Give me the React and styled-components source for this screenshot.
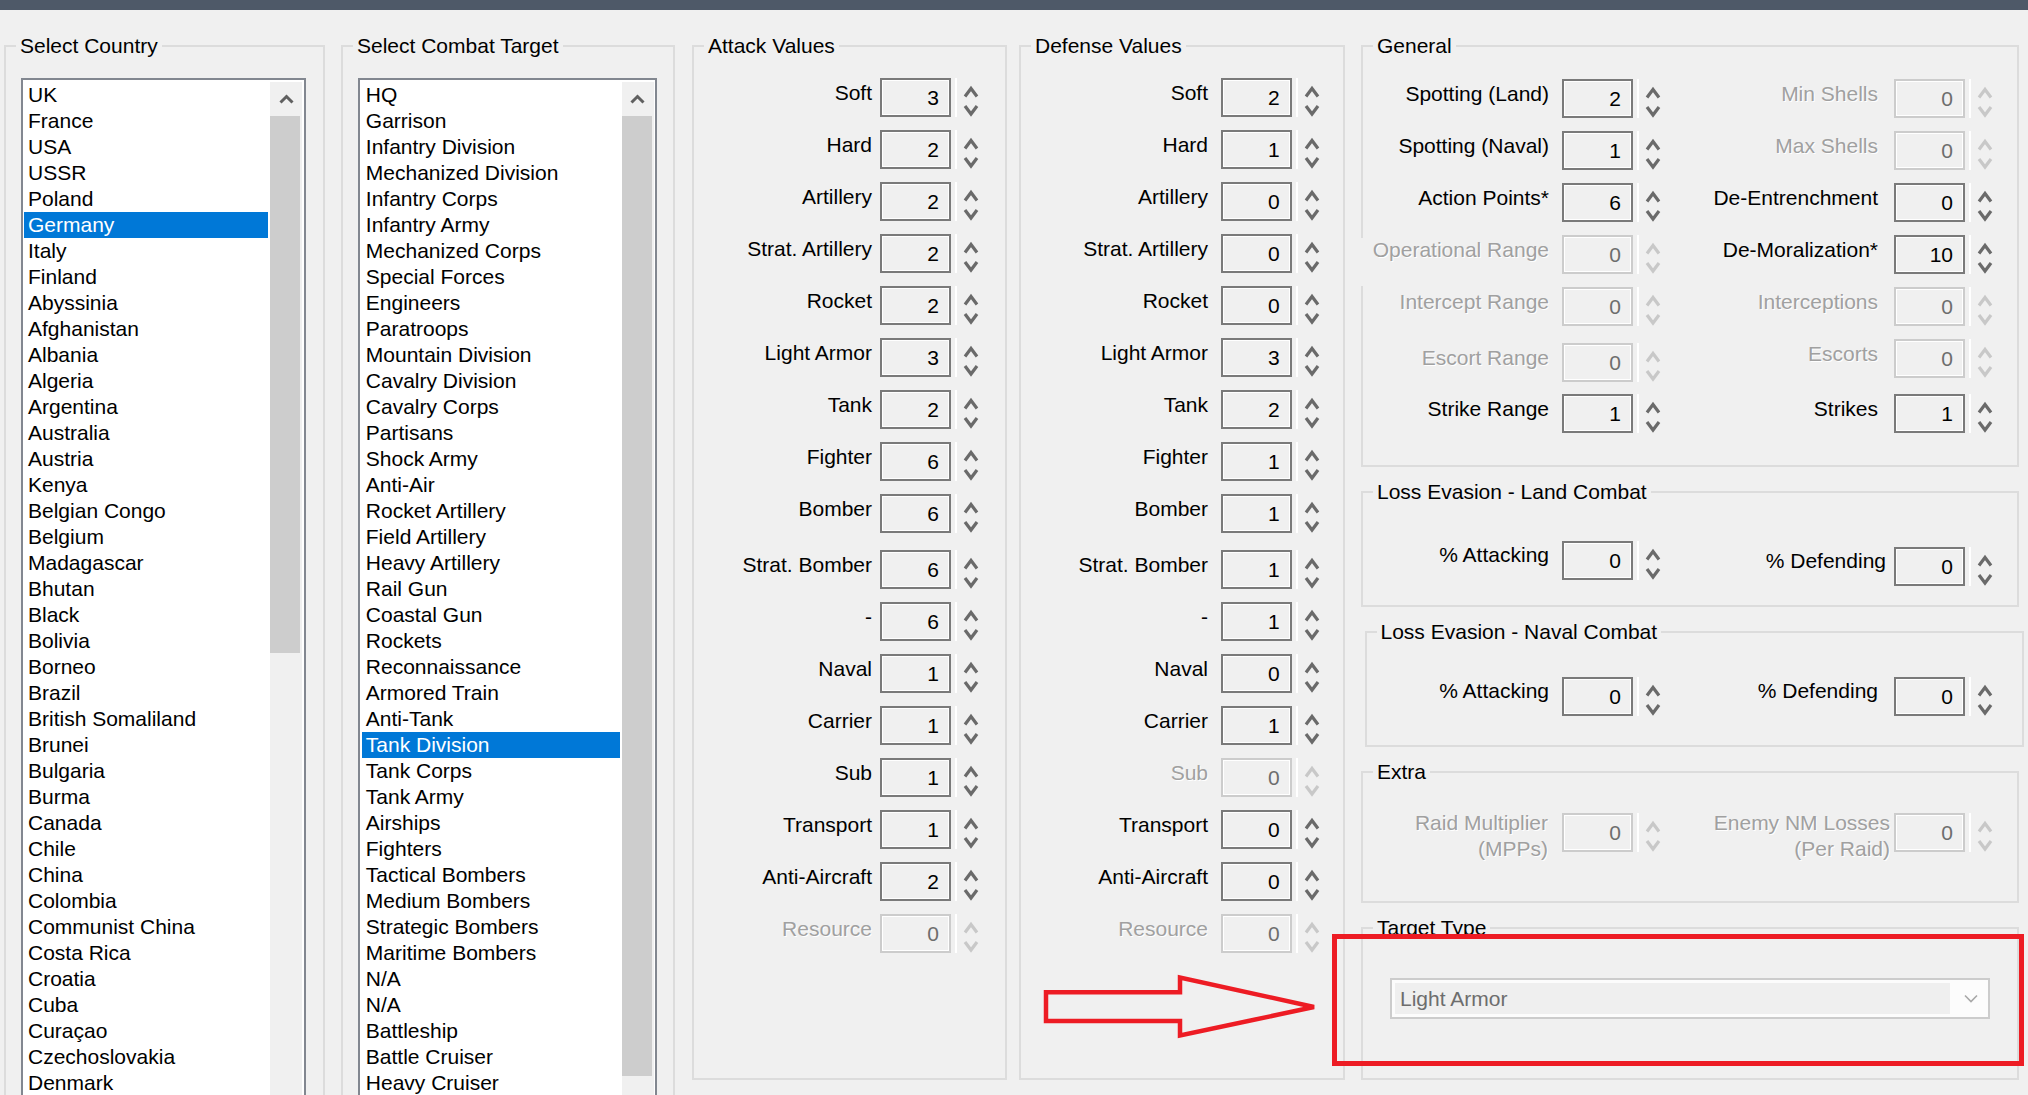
import React from "react";
import styled, { createGlobalStyle } from "styled-components";

const countries = [
  "UK", "France", "USA", "USSR", "Poland", "Germany", "Italy", "Finland",
  "Abyssinia", "Afghanistan", "Albania", "Algeria", "Argentina", "Australia",
  "Austria", "Kenya", "Belgian Congo", "Belgium", "Madagascar", "Bhutan",
  "Black", "Bolivia", "Borneo", "Brazil", "British Somaliland", "Brunei",
  "Bulgaria", "Burma", "Canada", "Chile", "China", "Colombia",
  "Communist China", "Costa Rica", "Croatia", "Cuba", "Curaçao",
  "Czechoslovakia", "Denmark",
];

const targets = [
  "HQ", "Garrison", "Infantry Division", "Mechanized Division",
  "Infantry Corps", "Infantry Army", "Mechanized Corps", "Special Forces",
  "Engineers", "Paratroops", "Mountain Division", "Cavalry Division",
  "Cavalry Corps", "Partisans", "Shock Army", "Anti-Air", "Rocket Artillery",
  "Field Artillery", "Heavy Artillery", "Rail Gun", "Coastal Gun", "Rockets",
  "Reconnaissance", "Armored Train", "Anti-Tank", "Tank Division",
  "Tank Corps", "Tank Army", "Airships", "Fighters", "Tactical Bombers",
  "Medium Bombers", "Strategic Bombers", "Maritime Bombers", "N/A", "N/A",
  "Battleship", "Battle Cruiser", "Heavy Cruiser",
];

const row = (label, value, extra = {}) => ({ label, value, ...extra });

const valueLabels = [
  "Soft", "Hard", "Artillery", "Strat. Artillery", "Rocket", "Light Armor",
  "Tank", "Fighter", "Bomber", "Strat. Bomber", "-", "Naval", "Carrier",
  "Sub", "Transport", "Anti-Aircraft", "Resource",
];

const attackValues = ["3", "2", "2", "2", "2", "3", "2", "6", "6", "6", "6", "1", "1", "1", "1", "2", "0"];
const defenseValues = ["2", "1", "0", "0", "0", "3", "2", "1", "1", "1", "1", "0", "1", "0", "0", "0", "0"];

// Strat. Bomber sits a little lower than the regular 52px pitch
const buildValues = (values, disabled) =>
  valueLabels.map((label, i) =>
    row(label, values[i], { gap: i === 9 ? 17 : 13, off: disabled.includes(label) })
  );

const attack = buildValues(attackValues, ["Resource"]);
const defense = buildValues(defenseValues, ["Sub", "Resource"]);

const generalLeft = [
  row("Spotting (Land)", "2"),
  row("Spotting (Naval)", "1"),
  row("Action Points*", "6"),
  row("Operational Range", "0", { off: true, cover: true }),
  row("Intercept Range", "0", { off: true }),
  row("Escort Range", "0", { off: true, gap: 17 }),
  row("Strike Range", "1", { gap: 12 }),
];

const generalRight = [
  row("Min Shells", "0", { off: true }),
  row("Max Shells", "0", { off: true }),
  row("De-Entrenchment", "0"),
  row("De-Moralization*", "10"),
  row("Interceptions", "0", { off: true }),
  row("Escorts", "0", { off: true }),
  row("Strikes", "1", { gap: 16 }),
];

const GlobalStyle = createGlobalStyle`
  html, body {
    margin: 0;
    background: #f0f0f0;
  }
  body {
    font-family: "Liberation Sans", Arial, sans-serif;
    font-size: 21px;
    color: #000;
    overflow: hidden;
  }
`;

const Window = styled.div`
  position: relative;
  width: 2028px;
  height: 1095px;
  overflow: hidden;
  background: #f0f0f0;
`;

const TitleStrip = styled.div`
  height: 10px;
  background: #4e5968;
`;

const Columns = styled.div`
  display: flex;
  align-items: flex-start;
  padding: 24px 0 0 4px;
`;

const Stack = styled.div`
  display: flex;
  flex-direction: column;
  gap: 13px;
  margin-left: 16px;
  width: 658px;
`;

const Group = styled.fieldset`
  box-sizing: border-box;
  flex-shrink: 0;
  min-width: 0;
  width: ${(p) => p.$w}px;
  height: ${(p) => p.$h}px;
  margin: 0 0 0 ${(p) => p.$ml || 0}px;
  padding: 0;
  border: 2px solid #dcdcdc;
`;

const Legend = styled.legend`
  margin-left: 10px;
  padding: 0 4px;
  line-height: 24px;
  white-space: nowrap;
`;

/* list boxes */

const List = styled.div`
  box-sizing: border-box;
  display: flex;
  width: ${(p) => p.$w}px;
  height: 1100px;
  margin: 20px 0 0 ${(p) => p.$ml}px;
  padding: 2px 1.5px 0 1.5px;
  border: 2px solid #828790;
  background: #fff;
`;

const Items = styled.div`
  flex: 1;
  min-width: 0;
`;

const Item = styled.div`
  height: 26px;
  line-height: 26px;
  padding-left: 4px;
  white-space: nowrap;
  background: ${(p) => (p.$selected ? "#0078d7" : "transparent")};
  color: ${(p) => (p.$selected ? "#fff" : "#000")};
`;

const ScrollBar = styled.div`
  width: 32px;
  margin-left: 2px;
  background: #f0f0f0;
`;

const ScrollArrow = styled.div`
  height: 34px;
  display: flex;
  align-items: center;
  justify-content: center;
  color: #606060;
`;

const Thumb = styled.div`
  width: 30px;
  height: ${(p) => p.$h}px;
  background: #cdcdcd;
`;

/* numeric up/down rows */

const Fields = styled.div`
  box-sizing: border-box;
  display: flex;
  flex-direction: column;
  flex: ${(p) => (p.$w ? "none" : "1")};
  width: ${(p) => (p.$w ? `${p.$w}px` : "auto")};
  padding: ${(p) => p.$top}px ${(p) => p.$right}px 0 0;
`;

const Pair = styled.div`
  display: flex;
  margin-left: ${(p) => p.$shift || 0}px;
`;

const Row = styled.div`
  display: flex;
  align-items: flex-start;
  height: 39px;
  margin-top: ${(p) => p.$gap}px;
`;

const Label = styled.div`
  flex: 1;
  box-sizing: border-box;
  margin: ${(p) => (p.$two ? "-3px" : "2.5px")} ${(p) => p.$gap}px 0
    ${(p) => (p.$cover ? "-3px" : "0")};
  height: ${(p) => (p.$cover ? "48px" : "auto")};
  background: ${(p) => (p.$cover ? "#f0f0f0" : "transparent")};
  text-align: right;
  line-height: ${(p) => (p.$two ? "26px" : "24px")};
  white-space: ${(p) => (p.$two ? "pre" : "nowrap")};
  color: ${(p) => (p.$off ? "#a0a0a0" : "#000")};
  text-shadow: ${(p) => (p.$off ? "1px 1px 0 #fff" : "none")};
`;

const SpinBox = styled.div`
  box-sizing: border-box;
  width: 71px;
  height: 39px;
  padding-right: 10px;
  border: 2px solid ${(p) => (p.$off ? "#cccccc" : "#7a7a7a")};
  box-shadow: inset 0 0 0 1px #fff;
  background: #f0f0f0;
  text-align: right;
  line-height: 35px;
  color: ${(p) => (p.$off ? "#6d6d6d" : "#000")};
`;

const SpinButtons = styled.div`
  display: flex;
  justify-content: center;
  width: 28px;
  height: 39px;
  margin-left: 4px;
  border-left: 2px solid #fff;
  color: ${(p) => (p.$off ? "#c8c8c8" : "#6a6a6a")};
`;

/* target type combo */

const Combo = styled.div`
  box-sizing: border-box;
  display: flex;
  width: 600px;
  height: 41px;
  margin: 38px 0 0 27px;
  padding: 3px;
  border: 2px solid #cccccc;
  background: #fcfcfc;
`;

const ComboText = styled.div`
  flex: 1;
  padding-left: 5px;
  line-height: 31px;
  background: #efefef;
  color: #6d6d6d;
`;

const ComboArrow = styled.div`
  width: 35px;
  display: flex;
  align-items: center;
  justify-content: center;
  padding-left: 6px;
  box-sizing: border-box;
  color: #a8a8a8;
`;

/* red markup drawn over the dialog */

const Highlight = styled.div`
  position: absolute;
  left: 1332px;
  top: 934px;
  width: 692px;
  height: 132px;
  box-sizing: border-box;
  border: 5px solid #ed1c24;
  pointer-events: none;
`;

const Pointer = styled.svg`
  position: absolute;
  left: 1030px;
  top: 960px;
  overflow: visible;
  pointer-events: none;
`;

function Spinner({ value, off }) {
  return (
    <>
      <SpinBox $off={off}>{value}</SpinBox>
      <SpinButtons $off={off}>
        <svg width="16" height="39" viewBox="0 0 16 39" fill="none" stroke="currentColor" strokeWidth="3.2">
          <polyline points="2,18.5 8,10.5 14,18.5" />
          <polyline points="2,28 8,36 14,28" />
        </svg>
      </SpinButtons>
    </>
  );
}

function SpinColumn({ rows, gap, top, right, width }) {
  return (
    <Fields $top={top} $right={right} $w={width}>
      {rows.map((r, i) => (
        <Row key={r.label + i} $gap={i === 0 ? 0 : r.gap ?? 13}>
          <Label $gap={r.lgap ?? gap} $off={r.off} $cover={r.cover} $two={r.label.includes("\n")}>
            {r.label}
          </Label>
          <Spinner value={r.value} off={r.off} />
        </Row>
      ))}
    </Fields>
  );
}

function ListBox({ items, selected, width, ml, thumb }) {
  return (
    <List $w={width} $ml={ml}>
      <Items>
        {items.map((t, i) => (
          <Item key={t + i} $selected={t === selected}>
            {t}
          </Item>
        ))}
      </Items>
      <ScrollBar>
        <ScrollArrow>
          <svg width="15" height="10" viewBox="0 0 15 10" fill="none" stroke="currentColor" strokeWidth="3">
            <polyline points="1.5,8.5 7.5,2.5 13.5,8.5" />
          </svg>
        </ScrollArrow>
        <Thumb $h={thumb} />
      </ScrollBar>
    </List>
  );
}

export default function App() {
  return (
    <Window>
      <GlobalStyle />
      <TitleStrip />
      <Columns>
        <Group $w={321} $h={1100}>
          <Legend>Select Country</Legend>
          <ListBox items={countries} selected="Germany" width={285} ml={14.5} thumb={537} />
        </Group>

        <Group $w={334} $h={1100} $ml={16}>
          <Legend>Select Combat Target</Legend>
          <ListBox items={targets} selected="Tank Division" width={299} ml={15.3} thumb={960} />
        </Group>

        <Group $w={315} $h={1046} $ml={17}>
          <Legend>Attack Values</Legend>
          <SpinColumn rows={attack} gap={8} top={20.3} right={20} />
        </Group>

        <Group $w={326} $h={1046} $ml={12}>
          <Legend>Defense Values</Legend>
          <SpinColumn rows={defense} gap={12.6} top={20.3} right={17.4} />
        </Group>

        <Stack>
          <Group $w={658} $h={433}>
            <Legend>General</Legend>
            <Pair>
              <SpinColumn rows={generalLeft} gap={13} top={21} right={8} width={312} />
              <SpinColumn rows={generalRight} gap={16} top={21} right={18} />
            </Pair>
          </Group>

          <Group $w={658} $h={127}>
            <Legend>Loss Evasion - Land Combat</Legend>
            <Pair>
              <SpinColumn rows={[row("% Attacking", "0")]} gap={13} top={36.7} right={8} width={312} />
              <SpinColumn rows={[row("% Defending", "0")]} gap={8} top={42.7} right={18} />
            </Pair>
          </Group>

          <Group $w={659} $h={127} $ml={3.5}>
            <Legend>Loss Evasion - Naval Combat</Legend>
            <Pair $shift={-3.5}>
              <SpinColumn rows={[row("% Attacking", "0")]} gap={13} top={32.7} right={8} width={312} />
              <SpinColumn rows={[row("% Defending", "0")]} gap={16} top={32.7} right={22.5} />
            </Pair>
          </Group>

          <Group $w={658} $h={143}>
            <Legend>Extra</Legend>
            <Pair>
              <SpinColumn
                rows={[row("Raid Multiplier\n(MPPs)", "0", { off: true })]}
                gap={14}
                top={28.7}
                right={8}
                width={312}
              />
              <SpinColumn
                rows={[row("Enemy NM Losses\n(Per Raid)", "0", { off: true })]}
                gap={4}
                top={28.7}
                right={18}
              />
            </Pair>
          </Group>

          <Group $w={658} $h={164}>
            <Legend>Target Type</Legend>
            <Combo>
              <ComboText>Light Armor</ComboText>
              <ComboArrow>
                <svg width="14" height="9" viewBox="0 0 14 9" fill="none" stroke="currentColor" strokeWidth="1.6">
                  <polyline points="1,1.5 7,7.5 13,1.5" />
                </svg>
              </ComboArrow>
            </Combo>
          </Group>
        </Stack>
      </Columns>

      <Pointer width="300" height="100" viewBox="0 0 300 100">
        <polygon
          points="16,32.3 150,32.3 150,17.5 284,47 150,75.5 150,61 16,61"
          fill="none"
          stroke="#ed1c24"
          strokeWidth="4.5"
          strokeLinejoin="miter"
        />
      </Pointer>
      <Highlight />
    </Window>
  );
}
